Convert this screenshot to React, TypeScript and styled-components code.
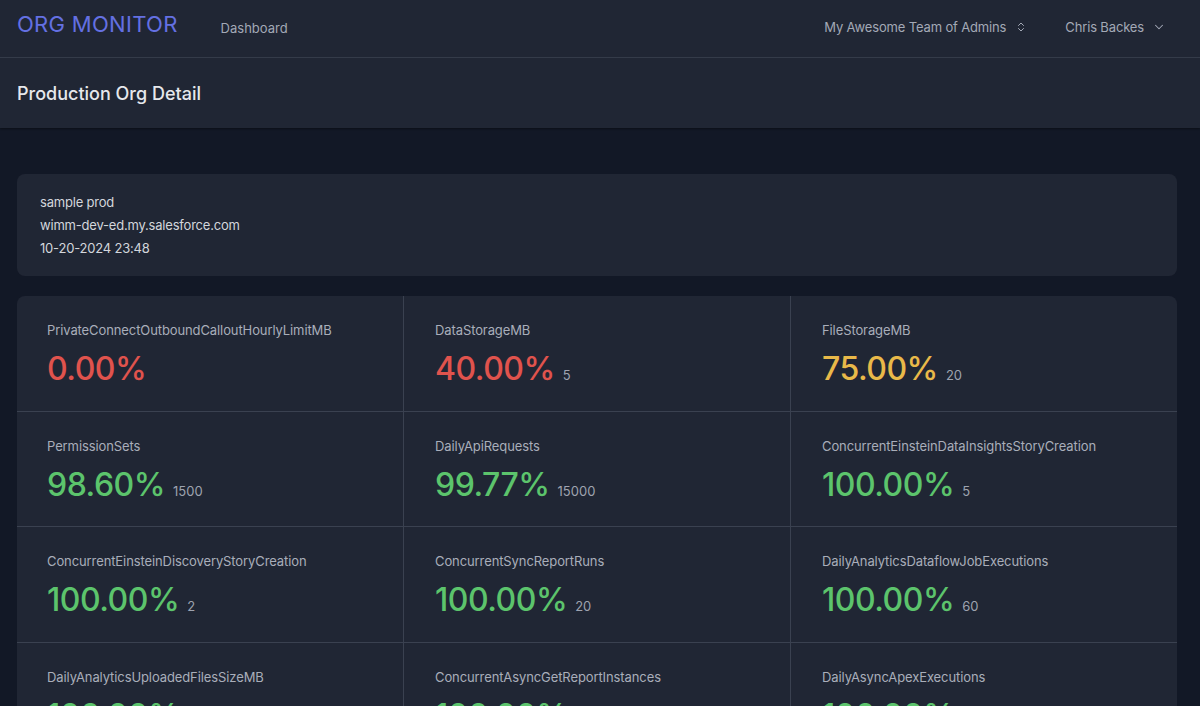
import React from "react";
import styled, { createGlobalStyle } from "styled-components";

const Global = createGlobalStyle`
  html, body { margin: 0; padding: 0; background: #121826; }
  body { font-family: Inter, "Noto Sans", sans-serif; -webkit-font-smoothing: antialiased; }
  * { box-sizing: border-box; }
`;

const Page = styled.div`
  height: 706px;
  overflow: hidden;
  background: #121826;
  color: #d1d5db;
`;

const TopBar = styled.header`
  height: 58px;
  background: #202634;
  border-bottom: 1px solid #363d4c;
  display: flex;
  align-items: center;
  padding: 0 34px 0 17px;
`;

const Logo = styled.div`
  font-size: 22px;
  letter-spacing: 0.3px;
  color: #6470e2;
  font-weight: 400;
  margin-right: 43px;
  margin-top: -9px;
`;

const NavLink = styled.a`
  font-size: 13px;
  color: #a3a9b6;
  text-decoration: none;
  margin-top: -2px;
`;

const Spacer = styled.div`
  flex: 1;
`;

const Menu = styled.button<{ $gap: number; $ml?: number }>`
  display: flex;
  align-items: center;
  gap: ${(p) => p.$gap}px;
  background: none;
  border: none;
  font-family: inherit;
  font-size: 13px;
  letter-spacing: -0.15px;
  color: #a3a9b6;
  padding: 0;
  margin-left: ${(p) => p.$ml ?? 0}px;
  margin-top: -4px;
`;

const SubHeader = styled.div`
  height: 70px;
  background: #202634;
  display: flex;
  align-items: center;
  padding: 0 17px;
  box-shadow: 0 1px 2px rgba(0, 0, 0, 0.4);
`;

const Title = styled.h1`
  margin: 0;
  font-size: 18px;
  font-weight: 500;
  color: #e6e8ec;
  margin-top: 1px;
`;

const Main = styled.main`
  padding: 46px 23px 0 17px;
  display: flex;
  flex-direction: column;
  gap: 20px;
`;

const InfoCard = styled.section`
  background: #202634;
  border-radius: 8px;
  padding: 17px 23px 16px;
  display: flex;
  flex-direction: column;
`;

const InfoLine = styled.div`
  font-size: 13px;
  line-height: 23px;
  letter-spacing: -0.2px;
  color: #d3d6dc;
`;

const Grid = styled.section`
  background: #202634;
  border-radius: 8px 8px 0 0;
  display: grid;
  grid-template-columns: 387px 387px 386px;
  overflow: hidden;
`;

const Cell = styled.div`
  height: 115.5px;
  padding: 24px 30px 0 30px;
  border-right: 1px solid #3a4150;
  border-bottom: 1px solid #3a4150;
  &:not(:nth-child(3n + 1)) { padding-left: 31px; }
  &:nth-child(3n) { border-right: none; }
`;

const Label = styled.div`
  font-size: 13px;
  line-height: 20px;
  letter-spacing: -0.1px;
  color: #a9aeba;
`;

const ValueRow = styled.div`
  display: flex;
  align-items: baseline;
  gap: 8px;
  margin-top: 9px;
`;

const Value = styled.span<{ $tone: "red" | "yellow" | "green" }>`
  font-size: 32px;
  line-height: 40px;
  font-weight: 500;
  letter-spacing: -0.5px;
  color: ${(p) =>
    p.$tone === "red" ? "#e0534d" : p.$tone === "yellow" ? "#e9b949" : "#5cc46c"};
`;

const Sub = styled.span`
  font-size: 13px;
  color: #9ea3af;
`;

const ChevronsUpDown = () => (
  <svg width="12" height="12" viewBox="0 0 24 24" fill="none" stroke="#a3a9b6" strokeWidth="2" strokeLinecap="round" strokeLinejoin="round">
    <path d="m7 15 5 5 5-5" />
    <path d="m7 9 5-5 5 5" />
  </svg>
);

const ChevronDown = () => (
  <svg width="14" height="14" viewBox="0 0 24 24" fill="none" stroke="#a3a9b6" strokeWidth="1.8" strokeLinecap="round" strokeLinejoin="round">
    <path d="m6 9 6 6 6-6" />
  </svg>
);

type Metric = { name: string; value: string; tone: "red" | "yellow" | "green"; sub?: string };

const metrics: Metric[] = [
  { name: "PrivateConnectOutboundCalloutHourlyLimitMB", value: "0.00%", tone: "red" },
  { name: "DataStorageMB", value: "40.00%", tone: "red", sub: "5" },
  { name: "FileStorageMB", value: "75.00%", tone: "yellow", sub: "20" },
  { name: "PermissionSets", value: "98.60%", tone: "green", sub: "1500" },
  { name: "DailyApiRequests", value: "99.77%", tone: "green", sub: "15000" },
  { name: "ConcurrentEinsteinDataInsightsStoryCreation", value: "100.00%", tone: "green", sub: "5" },
  { name: "ConcurrentEinsteinDiscoveryStoryCreation", value: "100.00%", tone: "green", sub: "2" },
  { name: "ConcurrentSyncReportRuns", value: "100.00%", tone: "green", sub: "20" },
  { name: "DailyAnalyticsDataflowJobExecutions", value: "100.00%", tone: "green", sub: "60" },
  { name: "DailyAnalyticsUploadedFilesSizeMB", value: "100.00%", tone: "green", sub: "50" },
  { name: "ConcurrentAsyncGetReportInstances", value: "100.00%", tone: "green", sub: "200" },
  { name: "DailyAsyncApexExecutions", value: "100.00%", tone: "green", sub: "250000" },
];

export default function App() {
  return (
    <Page>
      <Global />
      <TopBar>
        <Logo>ORG MONITOR</Logo>
        <NavLink href="#">Dashboard</NavLink>
        <Spacer />
        <Menu $gap={9}>
          My Awesome Team of Admins
          <ChevronsUpDown />
        </Menu>
        <Menu $gap={8} $ml={38}>
          Chris Backes
          <ChevronDown />
        </Menu>
      </TopBar>
      <SubHeader>
        <Title>Production Org Detail</Title>
      </SubHeader>
      <Main>
        <InfoCard>
          <InfoLine>sample prod</InfoLine>
          <InfoLine>wimm-dev-ed.my.salesforce.com</InfoLine>
          <InfoLine>10-20-2024 23:48</InfoLine>
        </InfoCard>
        <Grid>
          {metrics.map((m) => (
            <Cell key={m.name}>
              <Label>{m.name}</Label>
              <ValueRow>
                <Value $tone={m.tone}>{m.value}</Value>
                {m.sub && <Sub>{m.sub}</Sub>}
              </ValueRow>
            </Cell>
          ))}
        </Grid>
      </Main>
    </Page>
  );
}
